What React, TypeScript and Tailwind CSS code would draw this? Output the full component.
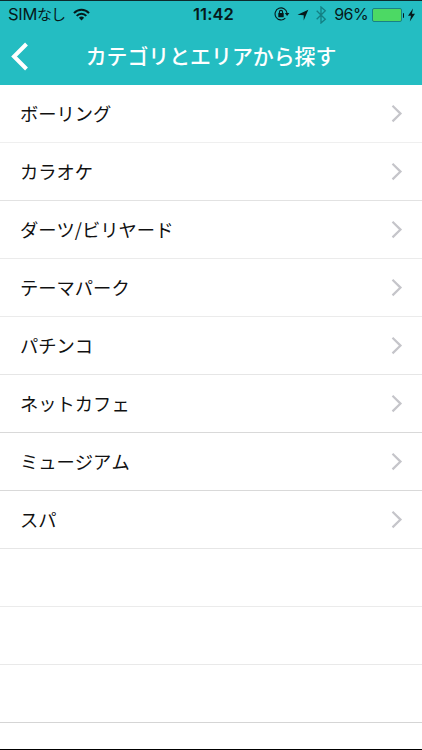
const categories: string[] = [
  'ボーリング',
  'カラオケ',
  'ダーツ/ビリヤード',
  'テーマパーク',
  'パチンコ',
  'ネットカフェ',
  'ミュージアム',
  'スパ',
];

const dividers: string[] = [
  'border-[#efefef]',
  'border-[#e2e2e2]',
  'border-[#ebebeb]',
  'border-[#ebebeb]',
  'border-[#e6e6e6]',
  'border-[#d9d9d9]',
  'border-[#d9d9d9]',
  'border-[#e6e6e6]',
  'border-[#ebebeb]',
  'border-[#e9e9e9]',
  'border-[#d5d5d5]',
];

function WifiIcon() {
  return (
    <svg className="ml-[7.500px] mt-[7px] h-[13px] w-[17px] shrink-0" viewBox="0 0 17 13" fill="none" stroke="#06191a" strokeWidth="2">
      <path d="M1 5.1C5.200 .5 11.800 .5 16 5.100" />
      <path d="M3.700 7.800C6.300 4.900 10.700 4.900 13.300 7.800" />
      <path d="M5.900 9.700Q8.500 7.300 11.100 9.700L8.500 12.400Z" fill="#06191a" stroke="none" />
    </svg>
  );
}

function RotationLockIcon() {
  return (
    <svg className="mt-[5px] h-[16px] w-[16px] shrink-0" viewBox="0 0 16 16" fill="none" stroke="#06191a">
      <path d="M13 7A6 6 0 1 0 11.300 12.200" strokeWidth="1.100" />
      <path d="M10.800 7.100H15.400L13.100 10Z" fill="#06191a" stroke="none" />
      <rect x="4.300" y="7" width="5.400" height="4.200" rx=".4" fill="#06191a" stroke="none" />
      <path d="M5.400 7.200V6.200a1.600 1.800 0 0 1 3.200 0V7.200" strokeWidth="1.100" />
    </svg>
  );
}

function LocationIcon() {
  return (
    <svg className="ml-[7px] mt-[8px] h-[12px] w-[12px] shrink-0" viewBox="0 0 12 12">
      <path d="M11.300 .7L6.700 11.500V6.300L.5 5.800Z" fill="#06191a" />
    </svg>
  );
}

function BluetoothIcon() {
  return (
    <svg className="ml-[7px] mt-[5px] h-[18px] w-[11px] shrink-0" viewBox="0 0 11 18" fill="none" stroke="#137f83" strokeWidth="1.300">
      <path d="M.7 4.700L9.300 13.200L5 17V1L9.300 4.800L.7 13.300" />
    </svg>
  );
}

function Battery() {
  return (
    <div className="ml-[4px] mt-[7px] flex shrink-0 items-center">
      <div className="h-[14px] w-[30px] rounded-[2px] border border-[#188286] bg-[#4cd964]" />
      <div className="ml-[0.500px] h-[5px] w-[1.500px] rounded-r bg-[#06191a]" />
    </div>
  );
}

function StatusBar() {
  return (
    <div className="grid h-[28px] grid-cols-[1fr_44px_1fr] text-[17px] leading-[27px] text-[#06191a]">
      <div className="flex items-start whitespace-nowrap pl-[8px]">
        <span className="font-[Inter] text-[16.500px] tracking-[-0.300px]">SIM</span>
        <span className="font-['Noto_Sans_CJK_JP',sans-serif] text-[15px] leading-[26px] tracking-[-1px]">なし</span>
        <WifiIcon />
      </div>
      <div className="whitespace-nowrap pl-[4px] text-center font-[Inter] text-[16.500px] font-semibold tracking-[0.100px]">11:42</div>
      <div className="flex items-start justify-end pr-[7px] font-[Inter]">
        <RotationLockIcon />
        <LocationIcon />
        <BluetoothIcon />
        <span className="ml-[7px] text-[16px] tracking-[-0.600px]">96%</span>
        <Battery />
        <svg className="ml-[4px] mt-[7px] h-[14px] w-[7px] shrink-0" viewBox="0 0 7 14">
          <path d="M5 .5L0 7.800H3L1.800 13.500L7 5.700H3.900Z" fill="#06191a" />
        </svg>
      </div>
    </div>
  );
}

function NavigationBar() {
  return (
    <div className="grid h-[55px] grid-cols-[40px_1fr_40px] items-start">
      <svg className="ml-[10px] mt-[13px] h-[29px] w-[20px]" viewBox="0 0 20 29" fill="none" stroke="#fff" strokeWidth="4">
        <path d="M16.500 2L4 14.500L16.500 27" />
      </svg>
      <h1 className="mt-[11px] whitespace-nowrap text-center text-[20.900px] font-medium leading-[30px] text-white">
        カテゴリとエリアから探す
      </h1>
    </div>
  );
}

export default function App() {
  return (
    <main className="flex h-[750px] w-[422px] flex-col overflow-hidden border-b border-black bg-white font-['Noto_Sans_CJK_JP',sans-serif] [font-kerning:none]">
      <header className="h-[85px] shrink-0 border-t border-[#0d2b2d] bg-[#24bdc2]">
        <StatusBar />
        <NavigationBar />
      </header>
      <ul>
        {dividers.map((divider, i) => (
          <li key={i} className={`flex h-[58px] items-center justify-between border-b pl-[20px] pr-[19px] ${divider}`}>
            <span className="pb-[2px] text-[18.300px] leading-[28px] text-[#111]">{categories[i]}</span>
            {categories[i] && (
              <svg className="h-[18px] w-[12px]" viewBox="0 0 12 18" fill="none" stroke="#c5c5ca" strokeWidth="2.200">
                <path d="M1.500 .8L9.500 8.600L1.500 16.400" />
              </svg>
            )}
          </li>
        ))}
      </ul>
    </main>
  );
}
